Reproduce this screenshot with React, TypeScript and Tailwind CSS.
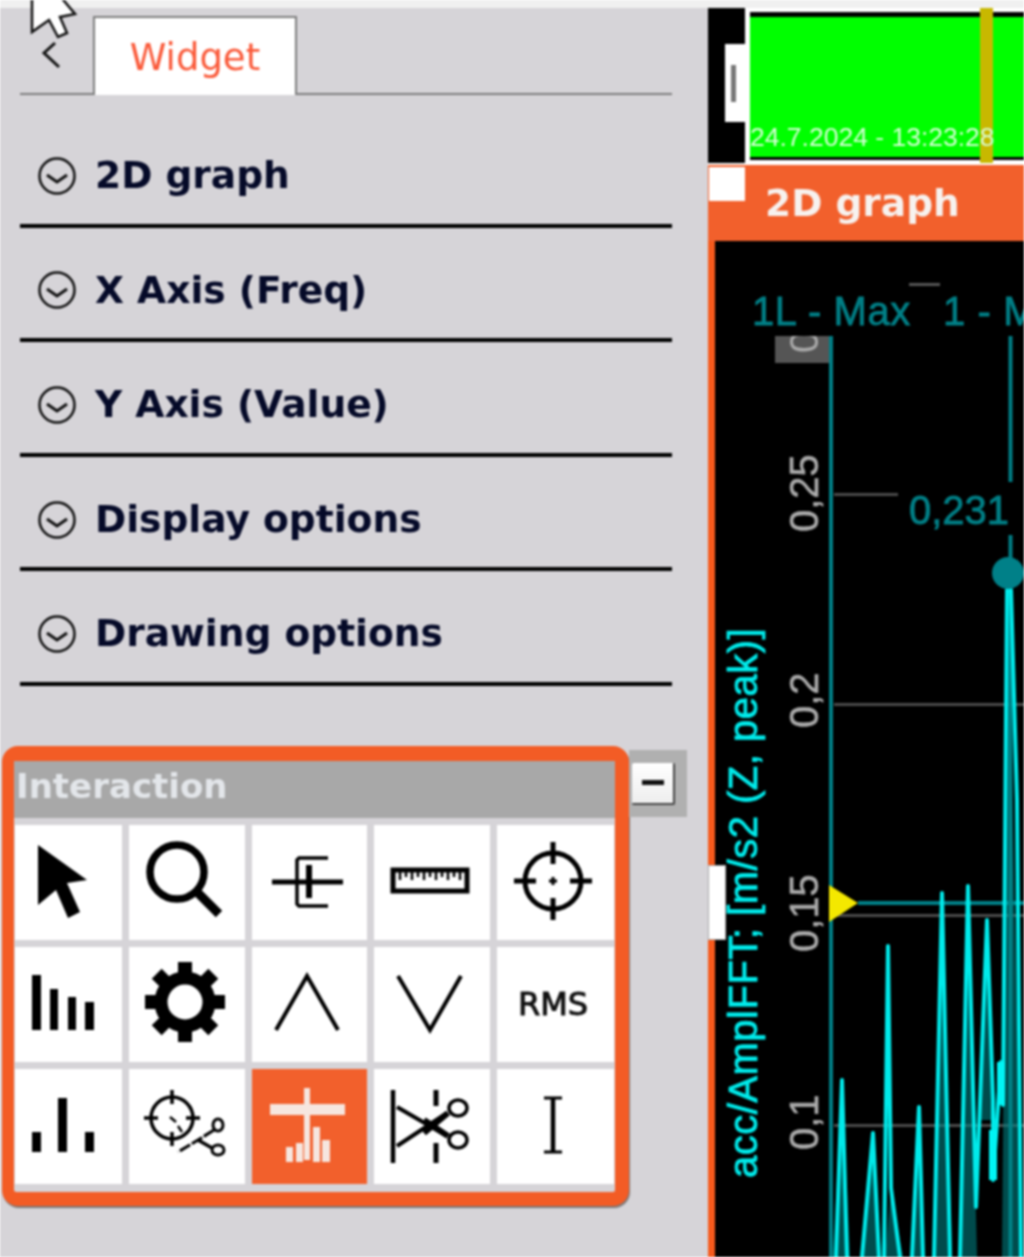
import React from "react";

const sections = ["2D graph", "X Axis (Freq)", "Y Axis (Value)", "Display options", "Drawing options"];

function Ico({ box, children }: { box: string; children?: React.ReactNode }) {
  return (
    <svg viewBox={box} className="block h-full w-full" fill="none" stroke="#000" strokeLinecap="butt">
      {children}
    </svg>
  );
}

const gearTeeth = [0, 45, 90, 135, 180, 225, 270, 315];
const rulerTicks = [400, 406, 412, 418, 424, 430, 436, 442, 448, 454, 460];

function Target({ cx, cy, r, sw, tick }: { cx: number; cy: number; r: number; sw: number; tick: number }) {
  return (
    <g strokeWidth={sw}>
      <circle cx={cx} cy={cy} r={r} />
      <path d={`M${cx} ${cy - r - tick}V${cy - r + tick}M${cx} ${cy + r - tick}V${cy + r + tick}M${cx - r - tick} ${cy}H${cx - r + tick}M${cx + r - tick} ${cy}H${cx + r + tick}`} />
    </g>
  );
}

const cells: { box: string; active?: boolean; node: React.ReactNode }[] = [
  { box: "15 825 107 115", node: <path d="M38 845L87 880L67 883L80 912L68 918L56 890L38 905Z" fill="#000" stroke="none" /> },
  { box: "129 825 116 115", node: <><circle cx="177" cy="872" r="27" strokeWidth="7.5" /><path d="M197 892L219 914" strokeWidth="9" /></> },
  { box: "252 825 115 115", node: <><path d="M272 882H343" strokeWidth="5" /><path d="M309 865V898" strokeWidth="6" /><path d="M328 858H299L297 860V904L299 906H328" strokeWidth="3.5" /></> },
  { box: "374 825 116 115", node: <><rect x="393" y="870" width="74" height="21" strokeWidth="5" /><path d={rulerTicks.map((x, i) => `M${x} 872V${i % 2 ? 877 : 880}`).join("")} strokeWidth="2.5" /></> },
  { box: "496 825 117 115", node: <><Target cx={552} cy={881} r={28} sw={5} tick={11} /><path d="M552 877V885M548 881H556" strokeWidth="3" /></> },
  { box: "15 947 107 115", node: <><rect x="32" y="975" width="9" height="55" fill="#000" stroke="none" /><rect x="50" y="989" width="8" height="41" fill="#000" stroke="none" /><rect x="68" y="997" width="8" height="33" fill="#000" stroke="none" /><rect x="85" y="1002" width="9" height="28" fill="#000" stroke="none" /></> },
  { box: "129 947 116 115", node: <><circle cx="185" cy="1002" r="24" strokeWidth="13" />{gearTeeth.map((a) => <rect key={a} x="178" y="962" width="14" height="14" fill="#000" stroke="none" transform={`rotate(${a} 185 1002)`} />)}</> },
  { box: "252 947 115 115", node: <path d="M276 1030L307 976L338 1030" strokeWidth="4" /> },
  { box: "374 947 116 115", node: <path d="M398 976L430 1030L461 976" strokeWidth="4" /> },
  { box: "496 947 117 115", node: <text x="552" y="1015" textAnchor="middle" fontFamily="'DejaVu Sans', sans-serif" fontSize="32" fill="#111" stroke="#111" strokeWidth="1">RMS</text> },
  { box: "15 1069 107 115", node: <><rect x="32" y="1132" width="9" height="20" fill="#000" stroke="none" /><rect x="58" y="1098" width="9" height="54" fill="#000" stroke="none" /><rect x="85" y="1132" width="9" height="20" fill="#000" stroke="none" /></> },
  { box: "129 1069 116 115", node: <><Target cx={172} cy={1118} r={21} sw={3.5} tick={7} /><path d="M170 1117L176 1122M178 1126L182 1132" strokeWidth="2.5" /><ellipse cx="218" cy="1125" rx="5" ry="6" strokeWidth="3" /><ellipse cx="218" cy="1150" rx="6" ry="5" strokeWidth="3" /><path d="M214 1130L198 1140L178 1152" strokeWidth="3" strokeDasharray="12 2" /><path d="M212 1148L198 1140" strokeWidth="3.5" /></> },
  { box: "252 1069 115 115", active: true, node: <g fill="#f6e6df" stroke="none"><rect x="270" y="1104" width="75" height="11" /><rect x="304" y="1088" width="6" height="72" /><rect x="286" y="1147" width="7" height="15" /><rect x="296" y="1143" width="7" height="19" /><rect x="313" y="1127" width="7" height="35" /><rect x="322" y="1140" width="8" height="22" /></g> },
  { box: "374 1069 116 115", node: <><path d="M393 1090V1163" strokeWidth="4.5" /><path d="M397 1107L447 1136M397 1146L447 1113" strokeWidth="4" /><path d="M424 1120L448 1136M424 1133L448 1113" strokeWidth="6" /><ellipse cx="458" cy="1108" rx="9" ry="8" strokeWidth="3.5" /><ellipse cx="458" cy="1140" rx="9" ry="8" strokeWidth="3.5" /><path d="M436 1090V1106M436 1143V1163" strokeWidth="5" /></> },
  { box: "496 1069 117 115", node: <><path d="M552 1098V1152" strokeWidth="4.5" /><path d="M543 1098H561M543 1152H561" strokeWidth="3" /></> },
];

const spikes =
  "M836 1257L842 1080L847 1257M862 1257L873 1133L879 1257M884 1257L888 946L891 1188L900 1257M912 1257L919 1107L923 1257M934 1257L942 893L950 1257M960 1257L968 886L976 1207L987 920L993 1100L993 1180L1001 1062L1003 1105L1007 590L1011 590L1017 800L1021 1257";

const haze = [
  "842,1080 833,1257 850,1257",
  "873,1133 863,1257 881,1257",
  "891,1188 885,1257 903,1257",
  "919,1107 912,1257 924,1257",
  "942,893 933,1257 952,1257",
  "968,886 959,1257 977,1257",
  "987,920 980,1120 994,1120",
  "1008,590 1002,1257 1022,1257",
];

export default function App() {
  return (
    <div className="relative flex h-[1257px] w-[1024px] flex-col overflow-hidden bg-[#d6d4d8] blur-[0.8px]">
      <div className="h-2 shrink-0 bg-[#f0f0f0]" />
      <div className="flex min-h-0 flex-1">
        {/* Left column */}
        <div className="w-[708px] shrink-0">
          <div className="ml-5 flex h-[87px] w-[652px] items-end border-b-2 border-[#7d7d7d]">
            <div className="-mb-[2px] ml-[73px] flex h-[79px] w-[204px] items-center justify-center border-x-2 border-t-2 border-[#7d7d7d] bg-white pt-[2px] font-['DejaVu_Sans',sans-serif] text-[37px] text-[#fa5a3a]">
              Widget
            </div>
          </div>
          <div className="ml-5 w-[652px] pt-[18px]">
            {sections.map((s) => (
              <div key={s} className="flex h-[114.6px] items-center gap-[19px] border-b-4 border-[#000] pl-[18px] pt-[15px]">
                <svg viewBox="0 0 38 38" className="h-[38px] w-[38px] shrink-0" fill="none" stroke="#111">
                  <circle cx="19" cy="19" r="17.5" strokeWidth="2.5" />
                  <path d="M9 18L19 25L29 18" strokeWidth="3" />
                </svg>
                <span className="font-['DejaVu_Sans',sans-serif] text-[37.6px] font-bold leading-none text-[#050a28]">{s}</span>
              </div>
            ))}
          </div>
          <div className="ml-[2px] mt-[60px] flex items-start">
            <div className="w-[627px] rounded-[16px] border-b-[14px] border-l-[12px] border-r-[14px] border-t-[15px] border-[#f35c25] bg-[#d6d4d8] pb-[8px] shadow-[1px_2px_1px_#777]">
              <div className="mb-[7px] flex h-[57px] items-center bg-[#a8a8a8] pb-[6px] pl-[2px] font-['DejaVu_Sans',sans-serif] text-[34px] font-bold text-[#e3e6ea]">
                Interaction
              </div>
              <div className="grid grid-cols-[107px_116px_115px_116px_117px] grid-rows-[115px_115px_115px] gap-[7px] pl-px">
                {cells.map((c, i) => (
                  <div key={i} className={c.active ? "bg-[#f2602c]" : "bg-white"}>
                    <Ico box={c.box}>{c.node}</Ico>
                  </div>
                ))}
              </div>
            </div>
            <div className="mt-1 flex h-[67px] w-[58px] items-start bg-[#b0b0b0] pl-[3px] pt-[13px]">
              <div className="flex h-[42px] w-[43px] items-center justify-center rounded-[2px] border-b-2 border-r-2 border-[#444] bg-[linear-gradient(#fff,#eee)]">
                <div className="h-[5px] w-[22px] bg-[#111]" />
              </div>
            </div>
          </div>
        </div>

        {/* Right column */}
        <div className="flex min-w-0 flex-1 flex-col">
          <div className="relative flex h-[157px] shrink-0 bg-white">
            <div className="relative h-[155px] w-[37px] shrink-0 bg-black">
              <div className="absolute left-[17px] top-[36px] flex h-[78px] w-[23px] items-center bg-white pl-[6px]">
                <div className="h-[37px] w-[5px] bg-[#777]" />
              </div>
            </div>
            <div className="absolute left-[272px] top-0 h-[155px] w-[13px] bg-[#c8b800]" />
            <div className="ml-[5px] flex flex-1 flex-col pt-[4px]">
              <div className="h-[5px] bg-black" />
              <div className="flex h-[140px] items-end bg-[#00ff00] pb-[5px] font-['Liberation_Sans',sans-serif] text-[26.5px] leading-[30px] text-[#d8ffd8]">
                <span className="relative whitespace-nowrap">24.7.2024 - 13:23:28</span>
              </div>
              <div className="h-[3px] bg-black" />
            </div>
          </div>
          <div className="flex h-[76px] shrink-0 items-start bg-[#f2602c]">
            <div className="ml-px mt-[2px] h-[34px] w-[36px] shrink-0 bg-white" />
            <div className="ml-5 mt-[13px] font-['DejaVu_Sans',sans-serif] text-[37.6px] font-bold leading-[50px] text-[#f7f2ef]">2D graph</div>
          </div>
          <div className="relative min-h-0 flex-1 border-l-[7px] border-[#f65a1c] bg-black">
            <svg viewBox="715 241 309 1016" className="block h-full w-full" fontFamily="'Liberation Sans', sans-serif" fontSize="40">
              <defs>
                <clipPath id="boxclip"><rect x="775" y="336" width="55" height="27" /></clipPath>
              </defs>
              <g stroke="#007f86" strokeWidth="0.8" fill="#007f86" letterSpacing="0.6">
                <text x="752" y="325">1L - Max</text>
                <text x="943" y="325">1 - Max</text>
              </g>
              <rect x="909" y="283" width="31" height="3" fill="#555" />
              <rect x="775" y="336" width="55" height="27" fill="#555" />
              <g clipPath="url(#boxclip)">
                <text transform="rotate(-90 818 353)" x="818" y="353" fill="#aaa">0</text>
              </g>

              <g fill="#4a4a4a">
                <rect x="834" y="493" width="64" height="3" />
                <rect x="834" y="703" width="190" height="3" />
                <rect x="834" y="914" width="190" height="3" />
                <rect x="834" y="1124" width="190" height="3" />
              </g>

              <path d="M831 336V1257" stroke="#007f86" strokeWidth="4" />
              <path d="M1010.5 336V482M1010.5 535V1257" stroke="#007f86" strokeWidth="4" />
              <path d="M858 903H1024" stroke="#007f86" strokeWidth="4" />

              {haze.map((p) => (
                <polygon key={p} points={p} fill="#00888a" opacity="0.55" />
              ))}
              <path d={spikes} fill="none" stroke="#00eaea" strokeWidth="4" strokeLinejoin="round" />
              <path d="M993 1130V1180M1001 1062V1105" stroke="#00f4f4" strokeWidth="8" />

              <circle cx="1008" cy="573" r="16" fill="#008088" />
              <text x="909" y="524" fill="#007f86" stroke="#007f86" strokeWidth="0.8">0,231</text>
              <path d="M829 885L858 903L829 922Z" fill="#f4e800" />

              <g fill="#aaa" stroke="#aaa" strokeWidth="0.6">
                <text transform="rotate(-90 818 532)" x="818" y="532">0,25</text>
                <text transform="rotate(-90 818 728)" x="818" y="728">0,2</text>
                <text transform="rotate(-90 818 952)" x="818" y="952">0,15</text>
                <text transform="rotate(-90 818 1150)" x="818" y="1150">0,1</text>
              </g>
              <text transform="rotate(-90 757 1178)" x="757" y="1178" fill="#00eaea" stroke="#00eaea" strokeWidth="0.8" letterSpacing="0.5">acc/AmplFFT; [m/s2 (Z, peak)]</text>
            </svg>
            <div className="absolute -left-[7px] top-[624px] h-[75px] w-[18px] border border-[#aaa] bg-white" />
          </div>
        </div>
      </div>

      {/* Mouse pointer lying over the tab */}
      <svg viewBox="0 0 90 75" className="absolute left-0 top-0 h-[75px] w-[90px]" fill="none">
        <path d="M32 -4V32L49 20L58 37L67 33L60 17L75 14L60 -4Z" fill="#fff" stroke="#111" strokeWidth="2.5" />
        <path d="M55 43L44 53L59 67" stroke="#111" strokeWidth="3" />
      </svg>
    </div>
  );
}
